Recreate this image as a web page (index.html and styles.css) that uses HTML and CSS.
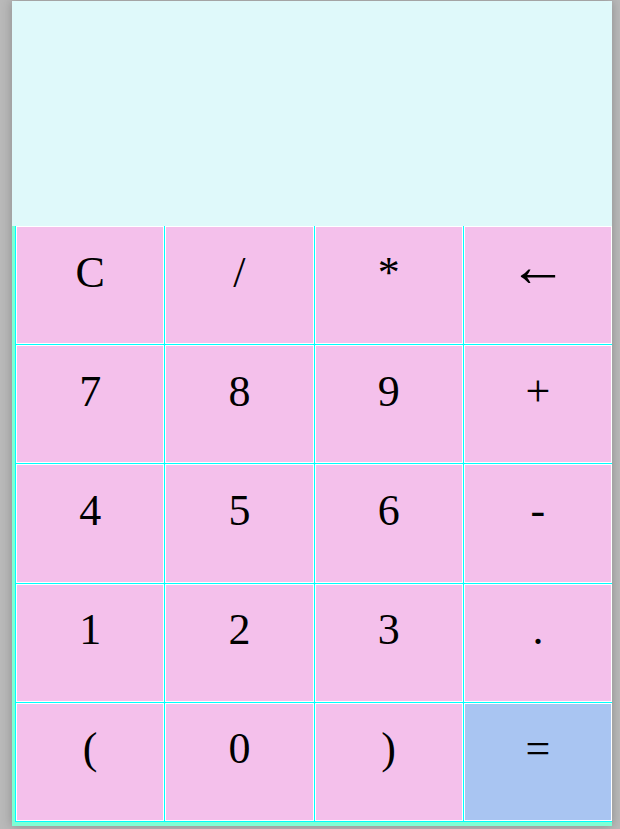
FILE: index.html
```html
<!DOCTYPE html>
<html>
<head>
<meta charset="utf-8">
<link rel="stylesheet" href="styles.css">
</head>
<body>
<div class="calc">
  <div class="display"></div>
  <div class="keys">
    <div class="grid">
      <button class="key">C</button>
      <button class="key">/</button>
      <button class="key">*</button>
      <button class="key"><span class="arrow">←</span></button>
      <button class="key">7</button>
      <button class="key">8</button>
      <button class="key">9</button>
      <button class="key">+</button>
      <button class="key">4</button>
      <button class="key">5</button>
      <button class="key">6</button>
      <button class="key">-</button>
      <button class="key">1</button>
      <button class="key">2</button>
      <button class="key">3</button>
      <button class="key">.</button>
      <button class="key">(</button>
      <button class="key">0</button>
      <button class="key">)</button>
      <button class="key equals">=</button>
    </div>
  </div>
</div>
</body>
</html>
```
FILE: styles.css
```css
html, body {
  margin: 0;
  padding: 0;
  height: 100%;
}
body {
  background: #b9b9b9;
  overflow: hidden;
}
.calc {
  margin: 1px 0 0 12px;
  width: 600px;
  box-shadow: 0 0 10px rgba(0, 0, 0, 0.25);
}
.display {
  height: 225px;
  background: #dff9fa;
}
.keys {
  background: #7fffd4;
  padding: 0 0 4px 3px;
}
.grid {
  display: grid;
  grid-template-columns: repeat(4, 1fr);
  grid-template-rows: repeat(5, 1fr);
  gap: 1px;
  height: 596px;
  box-sizing: border-box;
  padding: 0 0 1px 1px;
  background: #00ffff;
}
.key {
  margin: 0;
  border: 1px solid #ffffff;
  background: #f4c0eb;
  font-family: "Liberation Serif", "Times New Roman", serif;
  font-size: 44px;
  color: #000;
  display: flex;
  align-items: center;
  justify-content: center;
  padding: 0 0 26px 0;
  min-width: 0;
}
.arrow {
  font-size: 58px;
  line-height: 1;
  position: relative;
  top: -5px;
}
.equals {
  background: #a9c5f2;
}
```
